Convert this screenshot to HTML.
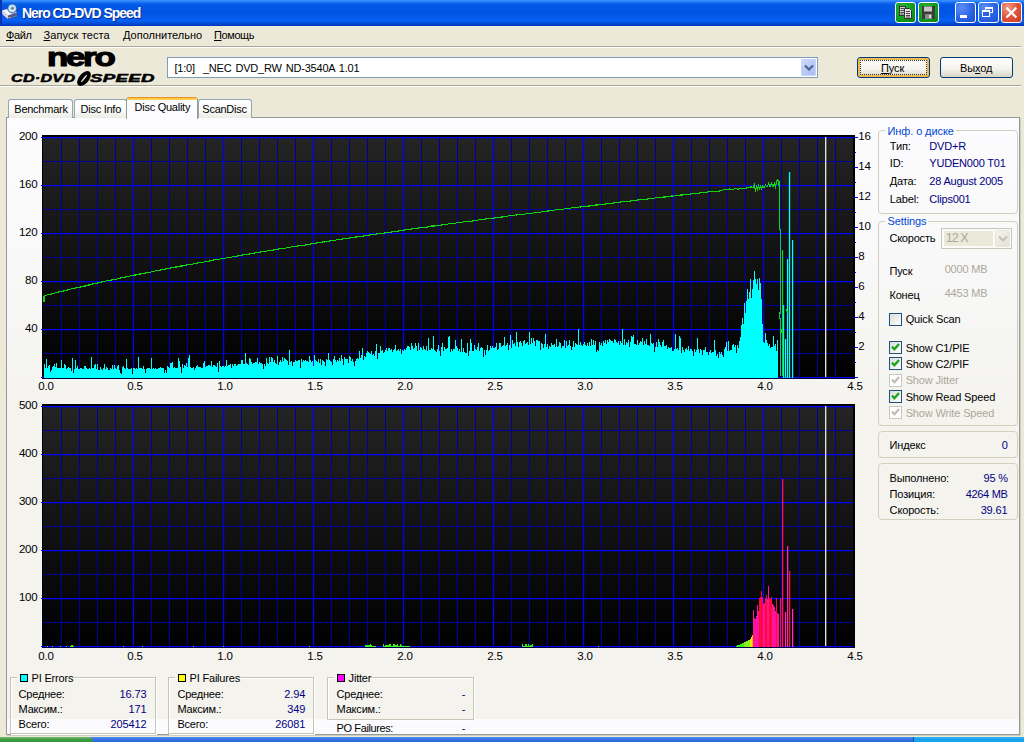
<!DOCTYPE html>
<html><head><meta charset="utf-8"><title>Nero CD-DVD Speed</title>
<style>
html,body{margin:0;padding:0}
body{width:1024px;height:742px;overflow:hidden;background:#ece9d8;position:relative;
 font-family:"Liberation Sans",sans-serif;font-size:11px}
.t{position:absolute;white-space:pre;line-height:14px;height:14px}
.a{position:absolute}
u{text-decoration:underline;text-underline-offset:1px}
.gb{position:absolute;border:1px solid #d0d0bf;border-radius:4px;box-sizing:border-box}
.cg{position:absolute;border:1px solid #c8c5b2;box-sizing:border-box;box-shadow:1px 1px 0 #fff, inset 1px 1px 0 #fff}
.cb{position:absolute;width:13px;height:13px;box-sizing:border-box;border:1px solid #1c5180;
 background:linear-gradient(135deg,#dcdcd7,#fff)}
.cb.d{border-color:#cac8bb;background:#fff}
.tb{position:absolute;top:2px;width:21px;height:21px;box-sizing:border-box;border:1px solid #fff;border-radius:3px}
.btn{position:absolute;box-sizing:border-box;border:1px solid #003c74;border-radius:3px;
 background:linear-gradient(#fff,#f3f2ea 60%,#d9d5c6);text-align:center}
</style></head><body>

<div class="a" style="left:0;top:0;width:1024px;height:26px;background:linear-gradient(#3d93ff 0,#2b80f8 1.5px,#0c66ee 3px,#0259e6 5px,#0054e2 12px,#0359ea 17px,#0661f4 20px,#0558e6 22px,#0347d0 24px,#0238b8 26px)"></div>
<div class="a" style="left:0;top:0;width:2px;height:26px;background:#0a34b4"></div>
<svg class="a" style="left:0;top:0" width="20" height="22" viewBox="0 0 20 22">
<path d="M2 10.4 L7.5 8.9 L17 12.2 L17 16.3 L7.8 18.9 L2.4 14.2Z" fill="#6a6ea8"/>
<path d="M2 10.4 L7.5 8.9 L17 12.2 L8 15.4Z" fill="#f6f6fb"/>
<path d="M2 10.4 L8 15.4 L7.8 18.9 L2.4 14.2Z" fill="#d4d5e6"/>
<path d="M8.4 16.2 L16.8 13.3 M8.4 17.2 L16.8 14.5" stroke="#454a80" stroke-width="0.8"/>
<circle cx="12.2" cy="8.4" r="4.5" fill="#9fd3f7" stroke="#33518f" stroke-width="0.9"/>
<circle cx="12.2" cy="8.4" r="3.1" fill="#e4f3fd"/>
<circle cx="12.4" cy="8.2" r="1.9" fill="#58b4f0"/>
<path d="M10.9 8.9 L14.8 6.9 L12.4 9.6Z" fill="#f0340e"/>
<rect x="8.8" y="17" width="1.4" height="1" fill="#f2d21c"/>
<rect x="14" y="15.9" width="1.1" height="0.9" fill="#2fa445"/>
</svg>
<div class="t" style="left:22.00px;top:6.15px;color:#fff;font-size:14px;letter-spacing:-1.05px;font-weight:bold;text-shadow:1px 1px 0 #0a2a8a;">Nero CD-DVD Speed</div>
<div class="tb" style="left:895px;background:radial-gradient(circle at 40% 35%,#2fbf3a,#0e9a1c 60%,#087a14)"></div>
<div class="tb" style="left:918px;background:radial-gradient(circle at 40% 35%,#2fbf3a,#0e9a1c 60%,#087a14)"></div>
<svg class="a" style="left:899px;top:5px" width="14" height="15" viewBox="0 0 14 15">
<rect x="0.5" y="1.5" width="6" height="9" fill="#d8d8d8" stroke="#333"/>
<path d="M5.5 3.5 h5 l2 2 v8 h-7z" fill="#e4e4e4" stroke="#333"/>
<path d="M1.5 3.5h3.5M1.5 5.5h3.5M1.5 7.5h3.5M1.5 9h3M7 6.5h4M7 8.5h4M7 10.5h4M7 12h4" stroke="#444" stroke-width="1"/>
</svg>
<svg class="a" style="left:921px;top:5px" width="15" height="15" viewBox="0 0 15 15">
<rect x="1" y="1" width="13" height="13" fill="#3c3c3c"/>
<rect x="3" y="1.5" width="8" height="5" fill="#c8c8c8"/>
<rect x="4" y="9" width="7" height="5" fill="#888"/>
<rect x="8" y="10" width="2" height="3" fill="#ddd"/>
</svg>
<div class="tb" style="left:955px;background:radial-gradient(circle at 30% 25%,#5b8ff5,#2a63e4 55%,#1b4fd0)"></div>
<div class="tb" style="left:978px;background:radial-gradient(circle at 30% 25%,#5b8ff5,#2a63e4 55%,#1b4fd0)"></div>
<div class="a" style="left:960px;top:15px;width:7px;height:3px;background:#fff"></div>
<div class="a" style="left:985px;top:7px;width:8px;height:6px;box-sizing:border-box;border:1px solid #fff;border-top-width:2px"></div>
<div class="a" style="left:982px;top:10px;width:8px;height:7px;box-sizing:border-box;border:1px solid #fff;border-top-width:2px;background:#2a63e4"></div>
<div class="tb" style="left:1001px;background:radial-gradient(circle at 30% 25%,#f0a088,#e0533a 50%,#c83a20)"></div>
<svg class="a" style="left:1005px;top:6px" width="13" height="13" viewBox="0 0 13 13">
<path d="M2.2 2.4 L10.6 10.8 M10.6 2.4 L2.2 10.8" stroke="#fff" stroke-width="2.1" stroke-linecap="square"/></svg>
<div class="t" style="left:6.00px;top:28.19px;color:#000;font-size:11px;letter-spacing:-0.35px;font-weight:normal;"><u>Ф</u>айл</div>
<div class="t" style="left:43.50px;top:28.19px;color:#000;font-size:11px;letter-spacing:0.1px;font-weight:normal;"><u>З</u>апуск теста</div>
<div class="t" style="left:123.00px;top:28.19px;color:#000;font-size:11px;letter-spacing:0px;font-weight:normal;"><u>Д</u>ополнительно</div>
<div class="t" style="left:214.00px;top:28.19px;color:#000;font-size:11px;letter-spacing:-0.4px;font-weight:normal;"><u>П</u>омощь</div>
<div class="a" style="left:0;top:46px;width:1021px;height:1px;background:#aca899"></div>
<div class="a" style="left:0;top:47px;width:1021px;height:1px;background:#fff"></div>
<div class="a" style="left:0;top:85px;width:1021px;height:1px;background:#aca899"></div>
<div class="a" style="left:0;top:86px;width:1021px;height:1px;background:#fff"></div>
<div class="t" style="left:46.5px;top:42px;height:30px;line-height:30px;font-size:26px;font-weight:bold;letter-spacing:-1.7px;color:#000;-webkit-text-stroke:1.1px #000;transform-origin:0 0;transform:scaleX(1.34)">nero</div>
<div class="t" style="left:10.5px;top:72px;height:13px;line-height:13px;font-size:11.5px;font-weight:bold;font-style:italic;letter-spacing:0.2px;color:#000;-webkit-text-stroke:0.5px #000;transform-origin:0 0;transform:scaleX(1.40)">CD·DVD</div>
<div class="t" style="left:90px;top:72px;height:13px;line-height:13px;font-size:11.5px;font-weight:bold;font-style:italic;letter-spacing:0.2px;color:#000;-webkit-text-stroke:0.5px #000;transform-origin:0 0;transform:scaleX(1.62)">SPEED</div>
<svg class="a" style="left:75px;top:70px" width="18" height="17" viewBox="0 0 18 17">
<ellipse cx="9" cy="8.5" rx="8.8" ry="5" transform="rotate(-50 9 8.5)" fill="#000"/>
<ellipse cx="9" cy="8.5" rx="4.8" ry="0.75" transform="rotate(-50 9 8.5)" fill="#ece9d8"/>
</svg>
<div class="a" style="left:167px;top:57px;width:651px;height:21px;box-sizing:border-box;border:1px solid #7f9db9;background:#fff"></div>
<div class="t" style="left:174.50px;top:61.19px;color:#000;font-size:11px;letter-spacing:-0.21px;font-weight:normal;word-spacing:1.2px;">[1:0]  _NEC DVD_RW ND-3540A 1.01</div>
<div class="a" style="left:801px;top:59px;width:15px;height:17px;border-radius:2px;background:linear-gradient(135deg,#cfdcfd,#b4c8f6 60%,#a6bcf0);box-shadow:inset 0 0 0 1px #c6d4fb"></div>
<svg class="a" style="left:804px;top:64px" width="10" height="8" viewBox="0 0 10 8">
<path d="M1 1.5 L5 5.5 L9 1.5" fill="none" stroke="#4d6185" stroke-width="2"/></svg>
<div class="btn" style="left:857px;top:57px;width:73px;height:21px;box-shadow:inset 0 0 0 2px #f0b850"></div>
<div class="a" style="left:860px;top:60px;width:67px;height:15px;box-sizing:border-box;border:1px dotted #333"></div>
<div class="t" style="left:881.00px;top:61.19px;color:#000;font-size:11px;letter-spacing:-0.1px;font-weight:normal;"><u>П</u>уск</div>
<div class="btn" style="left:940px;top:57px;width:73px;height:21px"></div>
<div class="t" style="left:960.00px;top:61.19px;color:#000;font-size:11px;letter-spacing:-0.1px;font-weight:normal;">Вы<u>х</u>од</div>
<div class="a" style="left:6px;top:117px;width:1014px;height:618px;box-sizing:border-box;border:1px solid #919b9c;background:linear-gradient(#fcfcfe 0,#f9f9fa 20%,#f4f3ee 48%,#f4f3ee 100%)"></div>
<div class="a" style="left:7px;top:719px;width:1012px;height:15px;background:#fbfbfd"></div>
<div class="a" style="left:1020px;top:118px;width:1px;height:618px;background:#cfcdc0"></div>
<div class="a" style="left:8px;top:99px;width:65px;height:19px;box-sizing:border-box;border:1px solid #91a7b4;border-bottom:none;border-radius:3px 3px 0 0;background:linear-gradient(#fff,#fafaf7 60%,#ecebe5)"></div>
<div class="t" style="left:14.30px;top:102.19px;color:#000;font-size:11px;letter-spacing:-0.25px;font-weight:normal;">Benchmark</div>
<div class="a" style="left:74px;top:99px;width:53px;height:19px;box-sizing:border-box;border:1px solid #91a7b4;border-bottom:none;border-radius:3px 3px 0 0;background:linear-gradient(#fff,#fafaf7 60%,#ecebe5)"></div>
<div class="t" style="left:80.50px;top:102.19px;color:#000;font-size:11px;letter-spacing:-0.25px;font-weight:normal;">Disc Info</div>
<div class="a" style="left:198px;top:99px;width:54px;height:19px;box-sizing:border-box;border:1px solid #91a7b4;border-bottom:none;border-radius:3px 3px 0 0;background:linear-gradient(#fff,#fafaf7 60%,#ecebe5)"></div>
<div class="t" style="left:202.30px;top:102.19px;color:#000;font-size:11px;letter-spacing:-0.25px;font-weight:normal;">ScanDisc</div>
<div class="a" style="left:126px;top:97px;width:72px;height:22px;box-sizing:border-box;border:1px solid #919b9c;border-top:none;border-bottom:none;border-radius:3px 3px 0 0;background:#fcfcfe;overflow:hidden"><div style="height:3px;margin:0 -1px;background:linear-gradient(#e68b2c 0,#e89a2c 1px,#ffc73c 1px,#ffcf55 3px)"></div></div>
<div class="t" style="left:134.50px;top:100.19px;color:#000;font-size:11px;letter-spacing:-0.25px;font-weight:normal;">Disc Quality</div>
<svg class="a" style="left:40px;top:133px" width="822" height="250" viewBox="40 133 822 250"><defs><linearGradient id="g135" x1="0" y1="0" x2="0" y2="1"><stop offset="0" stop-color="#242424"/><stop offset="1" stop-color="#000"/></linearGradient></defs><rect x="42" y="135" width="813" height="244" fill="#000"/><rect x="43" y="137" width="810" height="241" fill="url(#g135)"/><g shape-rendering="crispEdges"><rect x="61" y="137" width="1" height="241" fill="#00009e"/><rect x="79" y="137" width="1" height="241" fill="#00009e"/><rect x="97" y="137" width="1" height="241" fill="#00009e"/><rect x="115" y="137" width="1" height="241" fill="#00009e"/><rect x="133" y="137" width="1" height="241" fill="#0000ff"/><rect x="134" y="137" width="1" height="241" fill="#0000ff" opacity="0.25"/><rect x="151" y="137" width="1" height="241" fill="#00009e"/><rect x="169" y="137" width="1" height="241" fill="#00009e"/><rect x="187" y="137" width="1" height="241" fill="#00009e"/><rect x="205" y="137" width="1" height="241" fill="#00009e"/><rect x="223" y="137" width="1" height="241" fill="#0000ff"/><rect x="224" y="137" width="1" height="241" fill="#0000ff" opacity="0.25"/><rect x="241" y="137" width="1" height="241" fill="#00009e"/><rect x="259" y="137" width="1" height="241" fill="#00009e"/><rect x="277" y="137" width="1" height="241" fill="#00009e"/><rect x="295" y="137" width="1" height="241" fill="#00009e"/><rect x="313" y="137" width="1" height="241" fill="#0000ff"/><rect x="314" y="137" width="1" height="241" fill="#0000ff" opacity="0.25"/><rect x="331" y="137" width="1" height="241" fill="#00009e"/><rect x="349" y="137" width="1" height="241" fill="#00009e"/><rect x="367" y="137" width="1" height="241" fill="#00009e"/><rect x="385" y="137" width="1" height="241" fill="#00009e"/><rect x="403" y="137" width="1" height="241" fill="#0000ff"/><rect x="404" y="137" width="1" height="241" fill="#0000ff" opacity="0.25"/><rect x="421" y="137" width="1" height="241" fill="#00009e"/><rect x="439" y="137" width="1" height="241" fill="#00009e"/><rect x="457" y="137" width="1" height="241" fill="#00009e"/><rect x="475" y="137" width="1" height="241" fill="#00009e"/><rect x="493" y="137" width="1" height="241" fill="#0000ff"/><rect x="494" y="137" width="1" height="241" fill="#0000ff" opacity="0.25"/><rect x="511" y="137" width="1" height="241" fill="#00009e"/><rect x="529" y="137" width="1" height="241" fill="#00009e"/><rect x="547" y="137" width="1" height="241" fill="#00009e"/><rect x="565" y="137" width="1" height="241" fill="#00009e"/><rect x="583" y="137" width="1" height="241" fill="#0000ff"/><rect x="584" y="137" width="1" height="241" fill="#0000ff" opacity="0.25"/><rect x="601" y="137" width="1" height="241" fill="#00009e"/><rect x="619" y="137" width="1" height="241" fill="#00009e"/><rect x="637" y="137" width="1" height="241" fill="#00009e"/><rect x="655" y="137" width="1" height="241" fill="#00009e"/><rect x="673" y="137" width="1" height="241" fill="#0000ff"/><rect x="674" y="137" width="1" height="241" fill="#0000ff" opacity="0.25"/><rect x="691" y="137" width="1" height="241" fill="#00009e"/><rect x="709" y="137" width="1" height="241" fill="#00009e"/><rect x="727" y="137" width="1" height="241" fill="#00009e"/><rect x="745" y="137" width="1" height="241" fill="#00009e"/><rect x="763" y="137" width="1" height="241" fill="#0000ff"/><rect x="764" y="137" width="1" height="241" fill="#0000ff" opacity="0.25"/><rect x="781" y="137" width="1" height="241" fill="#00009e"/><rect x="799" y="137" width="1" height="241" fill="#00009e"/><rect x="817" y="137" width="1" height="241" fill="#00009e"/><rect x="835" y="137" width="1" height="241" fill="#00009e"/><rect x="43" y="137" width="810" height="1" fill="#0000ff"/><rect x="43" y="138" width="810" height="1" fill="#0000ff" opacity="0.25"/><rect x="41" y="137" width="2" height="1" fill="#0000ff"/><rect x="43" y="161" width="810" height="1" fill="#00009e"/><rect x="43" y="185" width="810" height="1" fill="#0000ff"/><rect x="43" y="186" width="810" height="1" fill="#0000ff" opacity="0.25"/><rect x="41" y="185" width="2" height="1" fill="#0000ff"/><rect x="43" y="209" width="810" height="1" fill="#00009e"/><rect x="43" y="233" width="810" height="1" fill="#0000ff"/><rect x="43" y="234" width="810" height="1" fill="#0000ff" opacity="0.25"/><rect x="41" y="233" width="2" height="1" fill="#0000ff"/><rect x="43" y="257" width="810" height="1" fill="#00009e"/><rect x="43" y="281" width="810" height="1" fill="#0000ff"/><rect x="43" y="282" width="810" height="1" fill="#0000ff" opacity="0.25"/><rect x="41" y="281" width="2" height="1" fill="#0000ff"/><rect x="43" y="305" width="810" height="1" fill="#00009e"/><rect x="43" y="329" width="810" height="1" fill="#0000ff"/><rect x="43" y="330" width="810" height="1" fill="#0000ff" opacity="0.25"/><rect x="41" y="329" width="2" height="1" fill="#0000ff"/><rect x="43" y="353" width="810" height="1" fill="#00009e"/><rect x="43" y="377" width="810" height="1" fill="#0000ff"/><rect x="43" y="378" width="810" height="1" fill="#0000ff" opacity="0.25"/><rect x="41" y="377" width="2" height="1" fill="#0000ff"/></g><path d="M44 378 L44 364.2 L45 364.2 L45 368.3 L46 368.3 L46 359.3 L47 359.3 L47 368.4 L48 368.4 L48 365.7 L49 365.7 L49 365.0 L50 365.0 L50 371.5 L51 371.5 L51 370.2 L52 370.2 L52 366.9 L53 366.9 L53 366.1 L54 366.1 L54 363.7 L55 363.7 L55 367.4 L56 367.4 L56 362.9 L57 362.9 L57 368.3 L58 368.3 L58 367.9 L59 367.9 L59 367.6 L60 367.6 L60 368.2 L61 368.2 L61 364.2 L62 364.2 L62 367.8 L63 367.8 L63 367.5 L64 367.5 L64 364.3 L65 364.3 L65 364.5 L66 364.5 L66 368.8 L67 368.8 L67 367.5 L68 367.5 L68 367.3 L69 367.3 L69 367.7 L70 367.7 L70 367.9 L71 367.9 L71 371.3 L72 371.3 L72 357.7 L73 357.7 L73 372.9 L74 372.9 L74 368.6 L75 368.6 L75 359.8 L76 359.8 L76 367.6 L77 367.6 L77 365.8 L78 365.8 L78 368.5 L79 368.5 L79 369.1 L80 369.1 L80 368.2 L81 368.2 L81 367.8 L82 367.8 L82 368.8 L83 368.8 L83 368.7 L84 368.7 L84 365.9 L85 365.9 L85 366.0 L86 366.0 L86 368.3 L87 368.3 L87 369.4 L88 369.4 L88 368.8 L89 368.8 L89 367.8 L90 367.8 L90 368.6 L91 368.6 L91 356.6 L92 356.6 L92 368.2 L93 368.2 L93 368.1 L94 368.1 L94 365.3 L95 365.3 L95 363.5 L96 363.5 L96 369.3 L97 369.3 L97 364.1 L98 364.1 L98 369.5 L99 369.5 L99 369.6 L100 369.6 L100 366.6 L101 366.6 L101 369.1 L102 369.1 L102 369.5 L103 369.5 L103 368.1 L104 368.1 L104 363.9 L105 363.9 L105 369.2 L106 369.2 L106 367.4 L107 367.4 L107 368.3 L108 368.3 L108 369.6 L109 369.6 L109 369.8 L110 369.8 L110 368.3 L111 368.3 L111 368.8 L112 368.8 L112 365.3 L113 365.3 L113 369.1 L114 369.1 L114 365.2 L115 365.2 L115 368.4 L116 368.4 L116 368.7 L117 368.7 L117 365.7 L118 365.7 L118 365.0 L119 365.0 L119 369.5 L120 369.5 L120 372.5 L121 372.5 L121 373.7 L122 373.7 L122 367.4 L123 367.4 L123 366.0 L124 366.0 L124 368.3 L125 368.3 L125 369.0 L126 369.0 L126 358.7 L127 358.7 L127 368.2 L128 368.2 L128 368.5 L129 368.5 L129 369.4 L130 369.4 L130 369.1 L131 369.1 L131 368.0 L132 368.0 L132 373.6 L133 373.6 L133 367.7 L134 367.7 L134 368.0 L135 368.0 L135 369.3 L136 369.3 L136 367.9 L137 367.9 L137 368.9 L138 368.9 L138 357.0 L139 357.0 L139 368.4 L140 368.4 L140 367.8 L141 367.8 L141 367.9 L142 367.9 L142 369.0 L143 369.0 L143 365.5 L144 365.5 L144 368.9 L145 368.9 L145 372.5 L146 372.5 L146 368.5 L147 368.5 L147 367.7 L148 367.7 L148 367.6 L149 367.6 L149 368.3 L150 368.3 L150 369.2 L151 369.2 L151 358.0 L152 358.0 L152 368.9 L153 368.9 L153 367.8 L154 367.8 L154 368.5 L155 368.5 L155 368.1 L156 368.1 L156 368.9 L157 368.9 L157 368.6 L158 368.6 L158 367.6 L159 367.6 L159 368.0 L160 368.0 L160 367.3 L161 367.3 L161 367.8 L162 367.8 L162 368.0 L163 368.0 L163 368.1 L164 368.1 L164 372.6 L165 372.6 L165 370.4 L166 370.4 L166 372.9 L167 372.9 L167 365.8 L168 365.8 L168 367.4 L169 367.4 L169 367.5 L170 367.5 L170 363.2 L171 363.2 L171 362.9 L172 362.9 L172 362.0 L173 362.0 L173 367.9 L174 367.9 L174 366.7 L175 366.7 L175 368.3 L176 368.3 L176 367.5 L177 367.5 L177 368.1 L178 368.1 L178 358.2 L179 358.2 L179 360.5 L180 360.5 L180 367.1 L181 367.1 L181 373.2 L182 373.2 L182 364.3 L183 364.3 L183 368.2 L184 368.2 L184 365.0 L185 365.0 L185 366.3 L186 366.3 L186 362.9 L187 362.9 L187 366.9 L188 366.9 L188 357.9 L189 357.9 L189 355.0 L190 355.0 L190 366.7 L191 366.7 L191 367.8 L192 367.8 L192 367.8 L193 367.8 L193 366.9 L194 366.9 L194 369.9 L195 369.9 L195 367.5 L196 367.5 L196 365.6 L197 365.6 L197 365.4 L198 365.4 L198 367.0 L199 367.0 L199 367.0 L200 367.0 L200 367.2 L201 367.2 L201 367.5 L202 367.5 L202 367.5 L203 367.5 L203 363.4 L204 363.4 L204 361.1 L205 361.1 L205 366.5 L206 366.5 L206 365.5 L207 365.5 L207 366.2 L208 366.2 L208 365.1 L209 365.1 L209 365.4 L210 365.4 L210 365.8 L211 365.8 L211 361.1 L212 361.1 L212 367.0 L213 367.0 L213 365.2 L214 365.2 L214 365.2 L215 365.2 L215 365.5 L216 365.5 L216 366.5 L217 366.5 L217 363.1 L218 363.1 L218 372.0 L219 372.0 L219 360.8 L220 360.8 L220 366.1 L221 366.1 L221 366.8 L222 366.8 L222 365.7 L223 365.7 L223 366.3 L224 366.3 L224 366.7 L225 366.7 L225 366.4 L226 366.4 L226 359.6 L227 359.6 L227 365.9 L228 365.9 L228 365.1 L229 365.1 L229 364.7 L230 364.7 L230 364.1 L231 364.1 L231 368.2 L232 368.2 L232 364.3 L233 364.3 L233 366.0 L234 366.0 L234 363.7 L235 363.7 L235 364.0 L236 364.0 L236 365.5 L237 365.5 L237 364.5 L238 364.5 L238 363.6 L239 363.6 L239 364.1 L240 364.1 L240 363.8 L241 363.8 L241 359.5 L242 359.5 L242 360.1 L243 360.1 L243 363.9 L244 363.9 L244 363.6 L245 363.6 L245 352.8 L246 352.8 L246 363.1 L247 363.1 L247 363.6 L248 363.6 L248 364.9 L249 364.9 L249 357.7 L250 357.7 L250 358.9 L251 358.9 L251 362.1 L252 362.1 L252 363.7 L253 363.7 L253 362.8 L254 362.8 L254 362.9 L255 362.9 L255 362.3 L256 362.3 L256 362.3 L257 362.3 L257 357.9 L258 357.9 L258 363.6 L259 363.6 L259 362.3 L260 362.3 L260 363.4 L261 363.4 L261 362.8 L262 362.8 L262 363.8 L263 363.8 L263 369.3 L264 369.3 L264 364.0 L265 364.0 L265 365.6 L266 365.6 L266 358.4 L267 358.4 L267 363.4 L268 363.4 L268 363.5 L269 363.5 L269 356.7 L270 356.7 L270 362.3 L271 362.3 L271 357.1 L272 357.1 L272 358.0 L273 358.0 L273 362.2 L274 362.2 L274 360.4 L275 360.4 L275 362.7 L276 362.7 L276 363.6 L277 363.6 L277 356.3 L278 356.3 L278 364.8 L279 364.8 L279 362.4 L280 362.4 L280 360.4 L281 360.4 L281 362.3 L282 362.3 L282 357.3 L283 357.3 L283 360.7 L284 360.7 L284 358.3 L285 358.3 L285 359.2 L286 359.2 L286 360.2 L287 360.2 L287 360.6 L288 360.6 L288 364.7 L289 364.7 L289 350.2 L290 350.2 L290 361.7 L291 361.7 L291 361.0 L292 361.0 L292 365.8 L293 365.8 L293 361.5 L294 361.5 L294 362.0 L295 362.0 L295 359.7 L296 359.7 L296 360.7 L297 360.7 L297 361.0 L298 361.0 L298 360.4 L299 360.4 L299 359.8 L300 359.8 L300 368.1 L301 368.1 L301 359.4 L302 359.4 L302 362.4 L303 362.4 L303 360.3 L304 360.3 L304 360.7 L305 360.7 L305 360.0 L306 360.0 L306 361.1 L307 361.1 L307 361.2 L308 361.2 L308 362.2 L309 362.2 L309 356.1 L310 356.1 L310 360.2 L311 360.2 L311 361.6 L312 361.6 L312 361.4 L313 361.4 L313 366.3 L314 366.3 L314 354.6 L315 354.6 L315 359.8 L316 359.8 L316 360.6 L317 360.6 L317 362.2 L318 362.2 L318 359.0 L319 359.0 L319 362.6 L320 362.6 L320 358.7 L321 358.7 L321 364.9 L322 364.9 L322 359.9 L323 359.9 L323 360.6 L324 360.6 L324 362.0 L325 362.0 L325 366.1 L326 366.1 L326 359.0 L327 359.0 L327 359.9 L328 359.9 L328 352.8 L329 352.8 L329 360.1 L330 360.1 L330 361.3 L331 361.3 L331 362.0 L332 362.0 L332 365.3 L333 365.3 L333 359.0 L334 359.0 L334 356.4 L335 356.4 L335 359.6 L336 359.6 L336 361.9 L337 361.9 L337 359.6 L338 359.6 L338 361.1 L339 361.1 L339 357.6 L340 357.6 L340 360.8 L341 360.8 L341 355.4 L342 355.4 L342 359.4 L343 359.4 L343 364.8 L344 364.8 L344 357.2 L345 357.2 L345 359.2 L346 359.2 L346 358.6 L347 358.6 L347 358.6 L348 358.6 L348 362.5 L349 362.5 L349 355.6 L350 355.6 L350 356.5 L351 356.5 L351 360.5 L352 360.5 L352 358.7 L353 358.7 L353 361.8 L354 361.8 L354 365.9 L355 365.9 L355 360.8 L356 360.8 L356 359.1 L357 359.1 L357 357.9 L358 357.9 L358 358.7 L359 358.7 L359 350.7 L360 350.7 L360 358.2 L361 358.2 L361 355.2 L362 355.2 L362 347.8 L363 347.8 L363 359.7 L364 359.7 L364 356.0 L365 356.0 L365 357.1 L366 357.1 L366 353.1 L367 353.1 L367 351.2 L368 351.2 L368 352.0 L369 352.0 L369 352.6 L370 352.6 L370 354.4 L371 354.4 L371 351.3 L372 351.3 L372 354.5 L373 354.5 L373 354.1 L374 354.1 L374 355.5 L375 355.5 L375 350.8 L376 350.8 L376 343.9 L377 343.9 L377 359.2 L378 359.2 L378 353.0 L379 353.0 L379 352.7 L380 352.7 L380 345.7 L381 345.7 L381 350.8 L382 350.8 L382 350.4 L383 350.4 L383 352.6 L384 352.6 L384 352.3 L385 352.3 L385 349.6 L386 349.6 L386 347.7 L387 347.7 L387 350.8 L388 350.8 L388 348.3 L389 348.3 L389 348.1 L390 348.1 L390 349.9 L391 349.9 L391 349.3 L392 349.3 L392 351.8 L393 351.8 L393 349.5 L394 349.5 L394 348.6 L395 348.6 L395 344.6 L396 344.6 L396 350.9 L397 350.9 L397 350.3 L398 350.3 L398 349.1 L399 349.1 L399 351.2 L400 351.2 L400 348.6 L401 348.6 L401 354.4 L402 354.4 L402 350.4 L403 350.4 L403 350.9 L404 350.9 L404 348.8 L405 348.8 L405 349.6 L406 349.6 L406 348.1 L407 348.1 L407 345.9 L408 345.9 L408 346.2 L409 346.2 L409 346.6 L410 346.6 L410 350.2 L411 350.2 L411 342.8 L412 342.8 L412 345.6 L413 345.6 L413 348.9 L414 348.9 L414 348.2 L415 348.2 L415 342.9 L416 342.9 L416 345.6 L417 345.6 L417 350.6 L418 350.6 L418 343.1 L419 343.1 L419 349.5 L420 349.5 L420 346.5 L421 346.5 L421 347.8 L422 347.8 L422 350.2 L423 350.2 L423 346.3 L424 346.3 L424 348.6 L425 348.6 L425 349.5 L426 349.5 L426 346.1 L427 346.1 L427 350.8 L428 350.8 L428 337.9 L429 337.9 L429 349.5 L430 349.5 L430 349.6 L431 349.6 L431 348.3 L432 348.3 L432 348.8 L433 348.8 L433 336.4 L434 336.4 L434 349.9 L435 349.9 L435 351.2 L436 351.2 L436 352.3 L437 352.3 L437 349.3 L438 349.3 L438 345.0 L439 345.0 L439 351.4 L440 351.4 L440 356.2 L441 356.2 L441 347.0 L442 347.0 L442 343.3 L443 343.3 L443 350.9 L444 350.9 L444 347.3 L445 347.3 L445 348.6 L446 348.6 L446 349.3 L447 349.3 L447 347.6 L448 347.6 L448 337.3 L449 337.3 L449 335.6 L450 335.6 L450 351.6 L451 351.6 L451 349.2 L452 349.2 L452 350.6 L453 350.6 L453 349.0 L454 349.0 L454 348.6 L455 348.6 L455 339.6 L456 339.6 L456 345.5 L457 345.5 L457 348.0 L458 348.0 L458 351.4 L459 351.4 L459 349.0 L460 349.0 L460 351.8 L461 351.8 L461 338.9 L462 338.9 L462 351.8 L463 351.8 L463 347.8 L464 347.8 L464 351.9 L465 351.9 L465 353.4 L466 353.4 L466 353.1 L467 353.1 L467 342.6 L468 342.6 L468 355.9 L469 355.9 L469 351.2 L470 351.2 L470 338.9 L471 338.9 L471 343.1 L472 343.1 L472 350.5 L473 350.5 L473 351.2 L474 351.2 L474 344.6 L475 344.6 L475 349.1 L476 349.1 L476 350.1 L477 350.1 L477 346.5 L478 346.5 L478 342.6 L479 342.6 L479 351.2 L480 351.2 L480 348.2 L481 348.2 L481 346.8 L482 346.8 L482 348.4 L483 348.4 L483 356.6 L484 356.6 L484 349.5 L485 349.5 L485 355.4 L486 355.4 L486 349.6 L487 349.6 L487 345.2 L488 345.2 L488 351.4 L489 351.4 L489 350.2 L490 350.2 L490 345.9 L491 345.9 L491 347.7 L492 347.7 L492 345.6 L493 345.6 L493 348.0 L494 348.0 L494 348.4 L495 348.4 L495 346.8 L496 346.8 L496 343.0 L497 343.0 L497 350.2 L498 350.2 L498 349.3 L499 349.3 L499 343.4 L500 343.4 L500 342.6 L501 342.6 L501 347.2 L502 347.2 L502 345.9 L503 345.9 L503 344.8 L504 344.8 L504 337.2 L505 337.2 L505 345.8 L506 345.8 L506 345.1 L507 345.1 L507 343.0 L508 343.0 L508 350.3 L509 350.3 L509 345.2 L510 345.2 L510 334.9 L511 334.9 L511 348.2 L512 348.2 L512 340.0 L513 340.0 L513 343.8 L514 343.8 L514 343.4 L515 343.4 L515 346.4 L516 346.4 L516 332.2 L517 332.2 L517 341.8 L518 341.8 L518 347.0 L519 347.0 L519 341.6 L520 341.6 L520 341.4 L521 341.4 L521 343.0 L522 343.0 L522 346.1 L523 346.1 L523 340.9 L524 340.9 L524 340.1 L525 340.1 L525 344.1 L526 344.1 L526 342.7 L527 342.7 L527 342.0 L528 342.0 L528 344.9 L529 344.9 L529 331.8 L530 331.8 L530 343.6 L531 343.6 L531 338.3 L532 338.3 L532 342.7 L533 342.7 L533 338.1 L534 338.1 L534 340.8 L535 340.8 L535 345.9 L536 345.9 L536 340.0 L537 340.0 L537 340.2 L538 340.2 L538 341.4 L539 341.4 L539 341.2 L540 341.2 L540 350.1 L541 350.1 L541 342.5 L542 342.5 L542 344.2 L543 344.2 L543 347.7 L544 347.7 L544 344.0 L545 344.0 L545 333.5 L546 333.5 L546 346.5 L547 346.5 L547 343.8 L548 343.8 L548 348.6 L549 348.6 L549 346.4 L550 346.4 L550 346.5 L551 346.5 L551 343.4 L552 343.4 L552 344.8 L553 344.8 L553 344.7 L554 344.7 L554 344.1 L555 344.1 L555 347.4 L556 347.4 L556 338.8 L557 338.8 L557 346.8 L558 346.8 L558 346.2 L559 346.2 L559 342.2 L560 342.2 L560 342.9 L561 342.9 L561 348.3 L562 348.3 L562 345.5 L563 345.5 L563 346.1 L564 346.1 L564 340.3 L565 340.3 L565 347.7 L566 347.7 L566 340.5 L567 340.5 L567 346.0 L568 346.0 L568 344.9 L569 344.9 L569 339.8 L570 339.8 L570 345.7 L571 345.7 L571 350.4 L572 350.4 L572 346.5 L573 346.5 L573 341.0 L574 341.0 L574 347.3 L575 347.3 L575 343.1 L576 343.1 L576 343.6 L577 343.6 L577 345.0 L578 345.0 L578 328.6 L579 328.6 L579 345.4 L580 345.4 L580 341.5 L581 341.5 L581 345.0 L582 345.0 L582 345.9 L583 345.9 L583 343.8 L584 343.8 L584 342.3 L585 342.3 L585 345.0 L586 345.0 L586 346.3 L587 346.3 L587 342.7 L588 342.7 L588 346.1 L589 346.1 L589 341.9 L590 341.9 L590 346.3 L591 346.3 L591 339.2 L592 339.2 L592 345.0 L593 345.0 L593 339.5 L594 339.5 L594 345.3 L595 345.3 L595 341.0 L596 341.0 L596 351.7 L597 351.7 L597 349.5 L598 349.5 L598 350.5 L599 350.5 L599 341.6 L600 341.6 L600 345.3 L601 345.3 L601 343.4 L602 343.4 L602 346.4 L603 346.4 L603 341.0 L604 341.0 L604 343.0 L605 343.0 L605 339.8 L606 339.8 L606 343.6 L607 343.6 L607 339.9 L608 339.9 L608 342.3 L609 342.3 L609 339.4 L610 339.4 L610 340.0 L611 340.0 L611 341.2 L612 341.2 L612 341.3 L613 341.3 L613 342.9 L614 342.9 L614 338.9 L615 338.9 L615 340.4 L616 340.4 L616 341.5 L617 341.5 L617 342.9 L618 342.9 L618 341.4 L619 341.4 L619 344.7 L620 344.7 L620 341.2 L621 341.2 L621 343.1 L622 343.1 L622 329.0 L623 329.0 L623 344.9 L624 344.9 L624 339.3 L625 339.3 L625 345.4 L626 345.4 L626 342.3 L627 342.3 L627 342.5 L628 342.5 L628 340.3 L629 340.3 L629 347.2 L630 347.2 L630 341.5 L631 341.5 L631 336.0 L632 336.0 L632 336.6 L633 336.6 L633 334.9 L634 334.9 L634 343.6 L635 343.6 L635 344.1 L636 344.1 L636 345.0 L637 345.0 L637 340.1 L638 340.1 L638 345.2 L639 345.2 L639 342.5 L640 342.5 L640 341.4 L641 341.4 L641 342.4 L642 342.4 L642 338.1 L643 338.1 L643 344.5 L644 344.5 L644 341.3 L645 341.3 L645 343.8 L646 343.8 L646 338.9 L647 338.9 L647 344.7 L648 344.7 L648 345.3 L649 345.3 L649 345.5 L650 345.5 L650 334.4 L651 334.4 L651 343.2 L652 343.2 L652 344.0 L653 344.0 L653 343.0 L654 343.0 L654 351.6 L655 351.6 L655 347.1 L656 347.1 L656 341.6 L657 341.6 L657 347.0 L658 347.0 L658 339.1 L659 339.1 L659 342.1 L660 342.1 L660 345.4 L661 345.4 L661 347.3 L662 347.3 L662 342.2 L663 342.2 L663 339.7 L664 339.7 L664 345.7 L665 345.7 L665 345.5 L666 345.5 L666 345.1 L667 345.1 L667 349.0 L668 349.0 L668 347.2 L669 347.2 L669 348.0 L670 348.0 L670 347.5 L671 347.5 L671 346.7 L672 346.7 L672 351.0 L673 351.0 L673 350.7 L674 350.7 L674 348.7 L675 348.7 L675 334.3 L676 334.3 L676 349.1 L677 349.1 L677 348.1 L678 348.1 L678 349.9 L679 349.9 L679 336.1 L680 336.1 L680 338.3 L681 338.3 L681 352.5 L682 352.5 L682 346.8 L683 346.8 L683 349.7 L684 349.7 L684 352.4 L685 352.4 L685 349.1 L686 349.1 L686 347.9 L687 347.9 L687 350.2 L688 350.2 L688 345.9 L689 345.9 L689 350.7 L690 350.7 L690 348.6 L691 348.6 L691 348.7 L692 348.7 L692 350.5 L693 350.5 L693 355.9 L694 355.9 L694 349.0 L695 349.0 L695 351.7 L696 351.7 L696 350.2 L697 350.2 L697 338.0 L698 338.0 L698 348.7 L699 348.7 L699 353.3 L700 353.3 L700 348.9 L701 348.9 L701 350.4 L702 350.4 L702 354.7 L703 354.7 L703 350.4 L704 350.4 L704 350.1 L705 350.1 L705 346.5 L706 346.5 L706 351.5 L707 351.5 L707 352.3 L708 352.3 L708 355.2 L709 355.2 L709 352.1 L710 352.1 L710 349.9 L711 349.9 L711 352.8 L712 352.8 L712 351.9 L713 351.9 L713 351.9 L714 351.9 L714 339.6 L715 339.6 L715 349.9 L716 349.9 L716 355.8 L717 355.8 L717 354.3 L718 354.3 L718 358.0 L719 358.0 L719 352.0 L720 352.0 L720 354.0 L721 354.0 L721 352.4 L722 352.4 L722 354.6 L723 354.6 L723 357.1 L724 357.1 L724 349.2 L725 349.2 L725 347.1 L726 347.1 L726 342.3 L727 342.3 L727 351.2 L728 351.2 L728 341.0 L729 341.0 L729 351.4 L730 351.4 L730 350.4 L731 350.4 L731 350.4 L732 350.4 L732 344.8 L733 344.8 L733 344.0 L734 344.0 L734 347.4 L735 347.4 L735 345.3 L736 345.3 L736 352.8 L737 352.8 L737 344.8 L738 344.8 L738 347.6 L739 347.6 L739 340.7 L740 340.7 L740 337.4 L741 337.4 L741 325.3 L742 325.3 L742 317.8 L743 317.8 L743 324.2 L744 324.2 L744 303.2 L745 303.2 L745 312.7 L746 312.7 L746 301.4 L747 301.4 L747 301.5 L748 301.5 L748 299.0 L749 299.0 L749 291.8 L750 291.8 L750 284.7 L751 284.7 L751 298.0 L752 298.0 L752 289.0 L753 289.0 L753 280.4 L754 280.4 L754 293.8 L755 293.8 L755 279.0 L756 279.0 L756 284.1 L757 284.1 L757 279.4 L758 279.4 L758 289.9 L759 289.9 L759 294.9 L760 294.9 L760 283.0 L761 283.0 L761 299.3 L762 299.3 L762 323.7 L763 323.7 L763 341.8 L764 341.8 L764 342.9 L765 342.9 L765 333.2 L766 333.2 L766 340.3 L767 340.3 L767 343.1 L768 343.1 L768 345.7 L769 345.7 L769 343.8 L770 343.8 L770 348.4 L771 348.4 L771 347.4 L772 347.4 L772 347.4 L773 347.4 L773 335.9 L774 335.9 L774 345.8 L775 345.8 L775 344.4 L776 344.4 L776 351.2 L777 351.2 L777 340.2 L778 340.2 L778 378Z" fill="#00ffff" shape-rendering="crispEdges"/><rect x="754" y="271" width="1" height="106" fill="#0ff" shape-rendering="crispEdges"/><rect x="750" y="279" width="1" height="98" fill="#0ff" shape-rendering="crispEdges"/><rect x="759" y="278" width="1" height="99" fill="#0ff" shape-rendering="crispEdges"/><rect x="757" y="280" width="1" height="97" fill="#0ff" shape-rendering="crispEdges"/><rect x="747" y="289" width="1" height="88" fill="#0ff" shape-rendering="crispEdges"/><rect x="61" y="360" width="1" height="17" fill="#0ff"/><rect x="782.9" y="305" width="1.3" height="73" fill="#00ffff"/><rect x="784.9" y="339" width="1.3" height="39" fill="#00ffff"/><rect x="786.9" y="259" width="1.3" height="119" fill="#00ffff"/><rect x="788.9" y="172" width="1.3" height="206" fill="#00ffff"/><rect x="791.9" y="240" width="1.3" height="138" fill="#00ffff"/><path d="M44 302 L44 296 L45 295.7 L46 295.2 L47 295.0 L48 294.6 L49 294.6 L50 294.2 L51 294.2 L52 293.9 L53 293.6 L54 293.5 L55 292.9 L56 292.5 L57 292.3 L58 292.1 L59 291.8 L60 291.5 L61 291.5 L62 291.4 L63 291.0 L64 291.0 L65 290.7 L66 290.1 L67 290.1 L68 289.8 L69 289.4 L70 289.6 L71 289.0 L72 288.9 L73 288.7 L74 288.6 L75 288.3 L76 287.9 L77 287.7 L78 287.3 L79 287.5 L80 287.3 L81 286.6 L82 286.3 L83 286.2 L84 286.0 L85 286.1 L86 285.8 L87 285.6 L88 285.0 L89 285.1 L90 284.8 L91 284.6 L92 284.5 L93 283.8 L94 283.7 L95 283.7 L96 283.6 L97 283.3 L98 282.8 L99 282.8 L100 282.6 L101 282.1 L102 282.0 L103 281.7 L104 281.4 L105 281.4 L106 281.0 L107 280.8 L108 280.6 L109 280.6 L110 280.1 L111 280.2 L112 279.7 L113 279.5 L114 279.7 L115 279.1 L116 279.3 L117 279.0 L118 278.8 L119 278.2 L120 278.2 L121 277.8 L122 278.0 L123 277.7 L124 277.4 L125 277.1 L126 276.9 L127 276.9 L128 276.5 L129 276.4 L130 275.9 L131 275.8 L132 275.5 L133 275.6 L134 275.3 L135 274.9 L136 275.1 L137 274.6 L138 274.4 L139 274.1 L140 274.0 L141 274.0 L142 273.6 L143 273.3 L144 273.3 L145 273.0 L146 273.1 L147 272.5 L148 272.7 L149 272.1 L150 272.3 L151 272.0 L152 271.5 L153 271.5 L154 271.2 L155 271.0 L156 270.7 L157 270.6 L158 270.8 L159 270.6 L160 270.3 L161 269.7 L162 269.6 L163 269.7 L164 269.1 L165 269.3 L166 268.9 L167 269.0 L168 268.3 L169 268.5 L170 268.1 L171 267.8 L172 267.6 L173 267.8 L174 267.4 L175 267.1 L176 267.0 L177 267.1 L178 266.5 L179 266.5 L180 266.1 L181 265.9 L182 266.1 L183 265.8 L184 265.4 L185 265.2 L186 265.0 L187 265.0 L188 264.8 L189 264.5 L190 264.3 L191 264.3 L192 264.2 L193 264.0 L194 263.7 L195 263.4 L196 263.1 L197 263.3 L198 262.9 L199 262.9 L200 262.4 L201 262.6 L202 262.2 L203 262.2 L204 262.1 L205 261.7 L206 261.3 L207 261.5 L208 261.1 L209 261.2 L210 260.7 L211 260.5 L212 260.6 L213 260.2 L214 259.9 L215 259.8 L216 259.8 L217 259.3 L218 259.4 L219 259.2 L220 259.0 L221 258.7 L222 258.8 L223 258.7 L224 258.5 L225 258.1 L226 258.1 L227 257.7 L228 257.8 L229 257.2 L230 257.5 L231 257.3 L232 256.9 L233 256.8 L234 256.6 L235 256.4 L236 256.0 L237 256.3 L238 255.8 L239 255.6 L240 255.4 L241 255.3 L242 255.4 L243 254.8 L244 254.7 L245 254.8 L246 254.4 L247 254.1 L248 254.2 L249 254.1 L250 253.9 L251 253.8 L252 253.3 L253 253.5 L254 253.3 L255 252.8 L256 252.7 L257 252.7 L258 252.5 L259 252.2 L260 252.0 L261 252.0 L262 251.7 L263 251.7 L264 251.7 L265 251.2 L266 251.2 L267 251.1 L268 250.7 L269 250.9 L270 250.7 L271 250.3 L272 250.2 L273 250.2 L274 249.9 L275 249.7 L276 249.8 L277 249.5 L278 249.1 L279 248.9 L280 248.8 L281 248.7 L282 248.8 L283 248.6 L284 248.5 L285 248.2 L286 248.1 L287 247.5 L288 247.6 L289 247.7 L290 247.5 L291 247.0 L292 246.9 L293 246.9 L294 246.6 L295 246.5 L296 246.1 L297 246.1 L298 246.0 L299 245.6 L300 245.5 L301 245.8 L302 245.5 L303 245.4 L304 245.1 L305 245.1 L306 244.9 L307 244.8 L308 244.2 L309 244.3 L310 244.0 L311 244.0 L312 243.7 L313 243.7 L314 243.7 L315 243.4 L316 243.1 L317 243.0 L318 242.8 L319 242.9 L320 242.5 L321 242.3 L322 242.3 L323 241.9 L324 242.0 L325 242.0 L326 241.6 L327 241.4 L328 241.3 L329 241.2 L330 240.8 L331 240.7 L332 240.5 L333 240.5 L334 240.4 L335 240.2 L336 240.0 L337 239.8 L338 239.8 L339 239.8 L340 239.6 L341 239.4 L342 239.3 L343 238.9 L344 239.0 L345 238.7 L346 238.6 L347 238.5 L348 238.3 L349 238.1 L350 237.9 L351 237.7 L352 237.7 L353 237.5 L354 237.4 L355 237.0 L356 237.0 L357 237.1 L358 236.7 L359 236.7 L360 236.5 L361 236.3 L362 236.5 L363 236.0 L364 236.1 L365 235.6 L366 235.4 L367 235.7 L368 235.3 L369 235.0 L370 235.0 L371 234.9 L372 234.9 L373 234.4 L374 234.3 L375 234.5 L376 234.3 L377 233.8 L378 233.8 L379 233.7 L380 233.7 L381 233.5 L382 233.5 L383 233.3 L384 233.0 L385 233.0 L386 232.8 L387 232.7 L388 232.4 L389 232.4 L390 232.2 L391 232.2 L392 231.7 L393 231.9 L394 231.3 L395 231.6 L396 231.3 L397 231.1 L398 231.2 L399 230.9 L400 230.7 L401 230.7 L402 230.6 L403 230.3 L404 230.1 L405 230.0 L406 229.8 L407 229.8 L408 229.5 L409 229.4 L410 229.3 L411 229.1 L412 228.9 L413 229.0 L414 228.9 L415 228.6 L416 228.4 L417 228.2 L418 228.1 L419 227.9 L420 227.9 L421 227.8 L422 227.4 L423 227.7 L424 227.3 L425 227.4 L426 227.2 L427 227.2 L428 226.6 L429 226.6 L430 226.7 L431 226.1 L432 226.0 L433 226.1 L434 226.0 L435 226.0 L436 225.8 L437 225.6 L438 225.7 L439 225.3 L440 225.1 L441 225.1 L442 224.8 L443 224.7 L444 224.6 L445 224.4 L446 224.5 L447 224.3 L448 224.1 L449 223.7 L450 223.7 L451 223.6 L452 223.5 L453 223.4 L454 223.4 L455 223.3 L456 223.0 L457 222.8 L458 222.8 L459 222.8 L460 222.3 L461 222.3 L462 222.3 L463 221.9 L464 221.8 L465 222.0 L466 221.8 L467 221.5 L468 221.2 L469 221.4 L470 221.2 L471 221.1 L472 221.1 L473 220.9 L474 220.5 L475 220.3 L476 220.2 L477 220.2 L478 220.0 L479 219.7 L480 219.6 L481 219.7 L482 219.5 L483 219.3 L484 219.5 L485 219.2 L486 218.7 L487 218.8 L488 218.9 L489 218.5 L490 218.5 L491 218.1 L492 218.1 L493 218.2 L494 218.0 L495 217.9 L496 217.5 L497 217.5 L498 217.4 L499 217.2 L500 217.2 L501 217.0 L502 217.1 L503 216.8 L504 216.6 L505 216.3 L506 216.2 L507 216.4 L508 215.9 L509 215.8 L510 215.7 L511 215.7 L512 215.7 L513 215.5 L514 215.5 L515 215.0 L516 214.8 L517 215.1 L518 214.7 L519 214.8 L520 214.5 L521 214.3 L522 214.2 L523 214.0 L524 214.3 L525 214.0 L526 213.7 L527 213.6 L528 213.5 L529 213.2 L530 213.5 L531 213.2 L532 213.3 L533 212.9 L534 212.8 L535 212.5 L536 212.3 L537 212.6 L538 212.5 L539 212.1 L540 212.2 L541 212.1 L542 211.7 L543 211.7 L544 211.7 L545 211.4 L546 211.5 L547 211.0 L548 211.0 L549 211.0 L550 210.6 L551 210.5 L552 210.7 L553 210.4 L554 210.4 L555 210.0 L556 209.9 L557 209.8 L558 209.6 L559 209.9 L560 209.4 L561 209.4 L562 209.1 L563 209.2 L564 209.0 L565 208.9 L566 208.6 L567 208.5 L568 208.7 L569 208.3 L570 208.2 L571 208.0 L572 207.9 L573 207.8 L574 207.6 L575 207.8 L576 207.5 L577 207.3 L578 207.4 L579 207.0 L580 206.9 L581 207.1 L582 206.6 L583 206.7 L584 206.7 L585 206.6 L586 206.2 L587 206.1 L588 206.2 L589 205.9 L590 206.1 L591 205.6 L592 205.8 L593 205.5 L594 205.2 L595 205.2 L596 204.9 L597 205.1 L598 204.8 L599 205.0 L600 204.7 L601 204.4 L602 204.3 L603 204.3 L604 204.0 L605 204.2 L606 203.7 L607 203.8 L608 203.7 L609 203.4 L610 203.6 L611 203.3 L612 203.3 L613 203.1 L614 202.9 L615 202.8 L616 202.5 L617 202.4 L618 202.6 L619 202.3 L620 202.3 L621 201.9 L622 202.0 L623 201.8 L624 201.8 L625 201.5 L626 201.3 L627 201.3 L628 201.2 L629 201.0 L630 201.2 L631 200.8 L632 200.8 L633 200.9 L634 200.7 L635 200.7 L636 200.5 L637 200.0 L638 200.0 L639 199.8 L640 200.0 L641 199.8 L642 199.6 L643 199.5 L644 199.5 L645 199.4 L646 199.0 L647 199.2 L648 198.9 L649 198.9 L650 198.5 L651 198.4 L652 198.7 L653 198.5 L654 198.3 L655 197.9 L656 197.8 L657 197.7 L658 197.6 L659 197.6 L660 197.5 L661 197.2 L662 197.2 L663 197.3 L664 196.9 L665 197.1 L666 196.9 L667 196.8 L668 196.5 L669 196.5 L670 196.5 L671 196.2 L672 195.9 L673 196.2 L674 196.1 L675 195.7 L676 195.5 L677 195.8 L678 195.5 L679 195.1 L680 195.1 L681 194.9 L682 195.2 L683 194.8 L684 195.0 L685 194.8 L686 194.3 L687 194.5 L688 194.3 L689 194.3 L690 194.3 L691 193.9 L692 193.7 L693 194.0 L694 193.6 L695 193.7 L696 193.5 L697 193.4 L698 193.4 L699 193.1 L700 192.9 L701 192.9 L702 192.7 L703 192.4 L704 192.1 L705 192.9 L706 192.2 L707 192.6 L708 191.8 L709 191.6 L710 191.4 L711 191.2 L712 191.9 L713 191.1 L714 191.3 L715 191.3 L716 191.5 L717 191.0 L718 191.2 L719 191.2 L720 190.8 L721 190.6 L722 191.0 L723 189.9 L724 189.9 L725 189.7 L726 190.1 L727 189.5 L728 189.7 L729 189.3 L730 188.8 L731 190.0 L732 189.4 L733 189.6 L734 189.0 L735 188.7 L736 188.4 L737 189.2 L738 189.3 L739 188.4 L740 187.9 L741 188.5 L742 188.2 L743 188.2 L744 188.8 L745 188.1 L746 188.3 L747 187.3 L748 187.6 L749 187.5 L750 187.7 L751 186.6 L752 187.4 L753 187.5 L754.5 184.5 L755.5 192 L756.5 185 L757.5 191 L758.5 184.5 L759.5 189.8 L760.5 185.3 L761.5 188.8 L762.5 186 L764 187.6 L765.5 185 L767 187.2 L768.5 183.6 L770 186.6 L771.5 183 L773 187 L774.5 182.5 L775.5 188.5 L776.5 181 L777.5 180 L779 181 L779.6 229 L780.6 230 L780.8 300 L779.8 316 L781 330 L780.4 376" fill="none" stroke="#12d412" stroke-width="1.1" shape-rendering="crispEdges"/><path d="M782.6 250 L782.6 376" fill="none" stroke="#1fd01f" stroke-width="1.2"/><path d="M786 309 L788 313" fill="none" stroke="#1fd01f" stroke-width="1.5"/><rect x="825" y="137" width="1.35" height="240" fill="#e0e0e0"/></svg>
<svg class="a" style="left:40px;top:402px" width="822" height="250" viewBox="40 402 822 250"><defs><linearGradient id="g404" x1="0" y1="0" x2="0" y2="1"><stop offset="0" stop-color="#242424"/><stop offset="1" stop-color="#000"/></linearGradient></defs><rect x="42" y="404" width="813" height="244" fill="#000"/><rect x="43" y="406" width="810" height="241" fill="url(#g404)"/><g shape-rendering="crispEdges"><rect x="61" y="406" width="1" height="241" fill="#00009e"/><rect x="79" y="406" width="1" height="241" fill="#00009e"/><rect x="97" y="406" width="1" height="241" fill="#00009e"/><rect x="115" y="406" width="1" height="241" fill="#00009e"/><rect x="133" y="406" width="1" height="241" fill="#0000ff"/><rect x="134" y="406" width="1" height="241" fill="#0000ff" opacity="0.25"/><rect x="151" y="406" width="1" height="241" fill="#00009e"/><rect x="169" y="406" width="1" height="241" fill="#00009e"/><rect x="187" y="406" width="1" height="241" fill="#00009e"/><rect x="205" y="406" width="1" height="241" fill="#00009e"/><rect x="223" y="406" width="1" height="241" fill="#0000ff"/><rect x="224" y="406" width="1" height="241" fill="#0000ff" opacity="0.25"/><rect x="241" y="406" width="1" height="241" fill="#00009e"/><rect x="259" y="406" width="1" height="241" fill="#00009e"/><rect x="277" y="406" width="1" height="241" fill="#00009e"/><rect x="295" y="406" width="1" height="241" fill="#00009e"/><rect x="313" y="406" width="1" height="241" fill="#0000ff"/><rect x="314" y="406" width="1" height="241" fill="#0000ff" opacity="0.25"/><rect x="331" y="406" width="1" height="241" fill="#00009e"/><rect x="349" y="406" width="1" height="241" fill="#00009e"/><rect x="367" y="406" width="1" height="241" fill="#00009e"/><rect x="385" y="406" width="1" height="241" fill="#00009e"/><rect x="403" y="406" width="1" height="241" fill="#0000ff"/><rect x="404" y="406" width="1" height="241" fill="#0000ff" opacity="0.25"/><rect x="421" y="406" width="1" height="241" fill="#00009e"/><rect x="439" y="406" width="1" height="241" fill="#00009e"/><rect x="457" y="406" width="1" height="241" fill="#00009e"/><rect x="475" y="406" width="1" height="241" fill="#00009e"/><rect x="493" y="406" width="1" height="241" fill="#0000ff"/><rect x="494" y="406" width="1" height="241" fill="#0000ff" opacity="0.25"/><rect x="511" y="406" width="1" height="241" fill="#00009e"/><rect x="529" y="406" width="1" height="241" fill="#00009e"/><rect x="547" y="406" width="1" height="241" fill="#00009e"/><rect x="565" y="406" width="1" height="241" fill="#00009e"/><rect x="583" y="406" width="1" height="241" fill="#0000ff"/><rect x="584" y="406" width="1" height="241" fill="#0000ff" opacity="0.25"/><rect x="601" y="406" width="1" height="241" fill="#00009e"/><rect x="619" y="406" width="1" height="241" fill="#00009e"/><rect x="637" y="406" width="1" height="241" fill="#00009e"/><rect x="655" y="406" width="1" height="241" fill="#00009e"/><rect x="673" y="406" width="1" height="241" fill="#0000ff"/><rect x="674" y="406" width="1" height="241" fill="#0000ff" opacity="0.25"/><rect x="691" y="406" width="1" height="241" fill="#00009e"/><rect x="709" y="406" width="1" height="241" fill="#00009e"/><rect x="727" y="406" width="1" height="241" fill="#00009e"/><rect x="745" y="406" width="1" height="241" fill="#00009e"/><rect x="763" y="406" width="1" height="241" fill="#0000ff"/><rect x="764" y="406" width="1" height="241" fill="#0000ff" opacity="0.25"/><rect x="781" y="406" width="1" height="241" fill="#00009e"/><rect x="799" y="406" width="1" height="241" fill="#00009e"/><rect x="817" y="406" width="1" height="241" fill="#00009e"/><rect x="835" y="406" width="1" height="241" fill="#00009e"/><rect x="43" y="406" width="810" height="1" fill="#0000ff"/><rect x="43" y="407" width="810" height="1" fill="#0000ff" opacity="0.25"/><rect x="41" y="406" width="2" height="1" fill="#0000ff"/><rect x="43" y="430" width="810" height="1" fill="#00009e"/><rect x="43" y="454" width="810" height="1" fill="#0000ff"/><rect x="43" y="455" width="810" height="1" fill="#0000ff" opacity="0.25"/><rect x="41" y="454" width="2" height="1" fill="#0000ff"/><rect x="43" y="478" width="810" height="1" fill="#00009e"/><rect x="43" y="502" width="810" height="1" fill="#0000ff"/><rect x="43" y="503" width="810" height="1" fill="#0000ff" opacity="0.25"/><rect x="41" y="502" width="2" height="1" fill="#0000ff"/><rect x="43" y="526" width="810" height="1" fill="#00009e"/><rect x="43" y="550" width="810" height="1" fill="#0000ff"/><rect x="43" y="551" width="810" height="1" fill="#0000ff" opacity="0.25"/><rect x="41" y="550" width="2" height="1" fill="#0000ff"/><rect x="43" y="574" width="810" height="1" fill="#00009e"/><rect x="43" y="598" width="810" height="1" fill="#0000ff"/><rect x="43" y="599" width="810" height="1" fill="#0000ff" opacity="0.25"/><rect x="41" y="598" width="2" height="1" fill="#0000ff"/><rect x="43" y="622" width="810" height="1" fill="#00009e"/><rect x="43" y="646" width="810" height="1" fill="#0000ff"/><rect x="43" y="647" width="810" height="1" fill="#0000ff" opacity="0.25"/><rect x="41" y="646" width="2" height="1" fill="#0000ff"/></g><g shape-rendering="crispEdges"><rect x="47" y="645.8" width="1" height="1.2" fill="#3cf01c"/><rect x="52" y="645.8" width="1" height="1.2" fill="#3cf01c"/><rect x="60" y="645.8" width="1" height="1.2" fill="#3cf01c"/><rect x="66" y="645.8" width="1" height="1.2" fill="#3cf01c"/><rect x="70" y="645.8" width="1" height="1.2" fill="#3cf01c"/><rect x="72" y="645.8" width="1" height="1.2" fill="#3cf01c"/><rect x="73" y="645.8" width="1" height="1.2" fill="#3cf01c"/><rect x="123" y="645.8" width="1" height="1.2" fill="#3cf01c"/><rect x="142" y="645.8" width="1" height="1.2" fill="#3cf01c"/><rect x="193" y="645.8" width="1" height="1.2" fill="#3cf01c"/><rect x="223" y="645.8" width="1" height="1.2" fill="#3cf01c"/><rect x="309" y="645.8" width="1" height="1.2" fill="#3cf01c"/><rect x="71" y="645.0" width="1" height="2.0" fill="#3cf01c"/><rect x="72" y="644.6" width="1" height="2.4" fill="#3cf01c"/><rect x="365" y="645.0" width="1" height="2.0" fill="#3cf01c"/><rect x="366" y="645.0" width="1" height="2.0" fill="#3cf01c"/><rect x="367" y="644.5" width="1" height="2.5" fill="#3cf01c"/><rect x="368" y="644.5" width="1" height="2.5" fill="#3cf01c"/><rect x="369" y="644.5" width="1" height="2.5" fill="#3cf01c"/><rect x="370" y="644.0" width="1" height="3.0" fill="#3cf01c"/><rect x="371" y="645.0" width="1" height="2.0" fill="#3cf01c"/><rect x="372" y="646.0" width="1" height="1.0" fill="#3cf01c"/><rect x="373" y="646.0" width="1" height="1.0" fill="#3cf01c"/><rect x="374" y="646.0" width="1" height="1.0" fill="#3cf01c"/><rect x="375" y="646.0" width="1" height="1.0" fill="#3cf01c"/><rect x="383" y="644.0" width="1" height="3.0" fill="#3cf01c"/><rect x="384" y="645.5" width="1" height="1.5" fill="#3cf01c"/><rect x="385" y="645.0" width="1" height="2.0" fill="#3cf01c"/><rect x="386" y="645.0" width="1" height="2.0" fill="#3cf01c"/><rect x="387" y="645.0" width="1" height="2.0" fill="#3cf01c"/><rect x="388" y="645.0" width="1" height="2.0" fill="#3cf01c"/><rect x="389" y="644.0" width="1" height="3.0" fill="#3cf01c"/><rect x="390" y="644.0" width="1" height="3.0" fill="#3cf01c"/><rect x="391" y="645.5" width="1" height="1.5" fill="#3cf01c"/><rect x="392" y="645.5" width="1" height="1.5" fill="#3cf01c"/><rect x="393" y="644.0" width="1" height="3.0" fill="#3cf01c"/><rect x="394" y="644.0" width="1" height="3.0" fill="#3cf01c"/><rect x="395" y="645.0" width="1" height="2.0" fill="#3cf01c"/><rect x="396" y="645.0" width="1" height="2.0" fill="#3cf01c"/><rect x="397" y="644.0" width="1" height="3.0" fill="#3cf01c"/><rect x="398" y="645.5" width="1" height="1.5" fill="#3cf01c"/><rect x="399" y="645.5" width="1" height="1.5" fill="#3cf01c"/><rect x="400" y="644.0" width="1" height="3.0" fill="#3cf01c"/><rect x="401" y="645.0" width="1" height="2.0" fill="#3cf01c"/><rect x="402" y="646.0" width="1" height="1.0" fill="#3cf01c"/><rect x="403" y="646.0" width="1" height="1.0" fill="#3cf01c"/><rect x="404" y="646.0" width="1" height="1.0" fill="#3cf01c"/><rect x="405" y="646.0" width="1" height="1.0" fill="#3cf01c"/><rect x="406" y="646.0" width="1" height="1.0" fill="#3cf01c"/><rect x="407" y="646.0" width="1" height="1.0" fill="#3cf01c"/><rect x="408" y="646.0" width="1" height="1.0" fill="#3cf01c"/><rect x="409" y="645.5" width="1" height="1.5" fill="#3cf01c"/><rect x="522" y="644.0" width="1" height="3.0" fill="#3cf01c"/><rect x="523" y="645.5" width="1" height="1.5" fill="#3cf01c"/><rect x="524" y="645.5" width="1" height="1.5" fill="#3cf01c"/><rect x="525" y="644.0" width="1" height="3.0" fill="#3cf01c"/><rect x="526" y="644.0" width="1" height="3.0" fill="#3cf01c"/><rect x="527" y="645.5" width="1" height="1.5" fill="#3cf01c"/><rect x="528" y="644.0" width="1" height="3.0" fill="#3cf01c"/><rect x="529" y="645.5" width="1" height="1.5" fill="#3cf01c"/><rect x="530" y="645.0" width="1" height="2.0" fill="#3cf01c"/><rect x="531" y="645.0" width="1" height="2.0" fill="#3cf01c"/><rect x="532" y="644.0" width="1" height="3.0" fill="#3cf01c"/><rect x="598" y="645.5" width="1" height="1.5" fill="#3cf01c"/><rect x="736" y="645.8" width="1" height="1.2" fill="#3cf01c"/><rect x="737" y="645.2" width="1" height="1.8" fill="#3cf01c"/><rect x="738" y="644.7" width="1" height="2.3" fill="#3cf01c"/><rect x="739" y="644.5" width="1" height="2.5" fill="#3cf01c"/><rect x="740" y="644.2" width="1" height="2.8" fill="#3cf01c"/><rect x="741" y="643.8" width="1" height="3.2" fill="#3cf01c"/><rect x="742" y="643.2" width="1" height="3.8" fill="#3cf01c"/><rect x="743" y="642.7" width="1" height="4.3" fill="#3cf01c"/><rect x="744" y="641.9" width="1" height="5.1" fill="#8cf01c"/><rect x="745" y="641.5" width="1" height="5.5" fill="#8cf01c"/><rect x="746" y="641.1" width="1" height="5.9" fill="#8cf01c"/><rect x="747" y="640.6" width="1" height="6.4" fill="#8cf01c"/><rect x="748" y="640.2" width="1" height="6.8" fill="#8cf01c"/><rect x="749" y="640.0" width="1" height="7.0" fill="#8cf01c"/><rect x="750" y="639.0" width="1" height="8.0" fill="#d8f010"/><rect x="751" y="637.0" width="1" height="10.0" fill="#ffe000"/><rect x="752" y="635.0" width="1" height="12.0" fill="#ffb000"/><rect x="753" y="636.0" width="1" height="11.0" fill="#ffd800"/><rect x="753" y="610.0" width="1" height="37.0" fill="#ff1493"/><rect x="754" y="618.0" width="1" height="29.0" fill="#ff1493"/><rect x="755" y="619.0" width="1" height="28.0" fill="#ff1493"/><rect x="756" y="616.0" width="1" height="31.0" fill="#ff10b8"/><rect x="757" y="605.0" width="1" height="42.0" fill="#ff10b8"/><rect x="758" y="611.0" width="1" height="36.0" fill="#ff1493"/><rect x="759" y="598.0" width="1" height="49.0" fill="#ff0a3c"/><rect x="760" y="597.0" width="1" height="50.0" fill="#ff0a3c"/><rect x="761" y="591.0" width="1" height="56.0" fill="#ff0a3c"/><rect x="762" y="597.0" width="1" height="50.0" fill="#ff0a3c"/><rect x="763" y="604.0" width="1" height="43.0" fill="#ff10b8"/><rect x="764" y="603.0" width="1" height="44.0" fill="#ff1493"/><rect x="765" y="598.0" width="1" height="49.0" fill="#ff0a3c"/><rect x="766" y="595.0" width="1" height="52.0" fill="#ff0a3c"/><rect x="767" y="599.0" width="1" height="48.0" fill="#ff1493"/><rect x="768" y="586.0" width="1" height="61.0" fill="#ff1493"/><rect x="769" y="598.0" width="1" height="49.0" fill="#ff0a3c"/><rect x="770" y="599.0" width="1" height="48.0" fill="#ff0a3c"/><rect x="771" y="597.0" width="1" height="50.0" fill="#ff0a3c"/><rect x="772" y="604.0" width="1" height="43.0" fill="#ff1493"/><rect x="773" y="605.0" width="1" height="42.0" fill="#ff10b8"/><rect x="774" y="607.0" width="1" height="40.0" fill="#ff1493"/><rect x="775" y="611.0" width="1" height="36.0" fill="#ff1493"/><rect x="776" y="598.0" width="1" height="49.0" fill="#ff0a3c"/><rect x="777" y="613.0" width="1" height="34.0" fill="#ff1493"/><rect x="778" y="614.0" width="1" height="33.0" fill="#ff1493"/></g><rect x="779.9" y="598" width="1.3" height="49" fill="#ff1050"/><rect x="782.0" y="479" width="1.3" height="168" fill="#ff1060"/><rect x="784.9" y="612" width="1.3" height="35" fill="#ff30a0"/><rect x="787.0" y="546" width="1.3" height="101" fill="#ff20c0"/><rect x="789.0" y="571" width="1.3" height="76" fill="#ff1040"/><rect x="792.0" y="609" width="1.3" height="38" fill="#ff30c0"/><rect x="825" y="406" width="1.35" height="240" fill="#e0e0e0"/></svg>
<svg class="a" style="left:853px;top:130px" width="8" height="252" viewBox="853 130 8 252" shape-rendering="crispEdges"><rect x="855" y="137" width="3" height="1" fill="#0000ff"/><rect x="854" y="152" width="2" height="1" fill="#0000d0"/><rect x="855" y="167" width="3" height="1" fill="#0000ff"/><rect x="854" y="182" width="2" height="1" fill="#0000d0"/><rect x="855" y="197" width="3" height="1" fill="#0000ff"/><rect x="854" y="212" width="2" height="1" fill="#0000d0"/><rect x="855" y="227" width="3" height="1" fill="#0000ff"/><rect x="854" y="242" width="2" height="1" fill="#0000d0"/><rect x="855" y="257" width="3" height="1" fill="#0000ff"/><rect x="854" y="272" width="2" height="1" fill="#0000d0"/><rect x="855" y="287" width="3" height="1" fill="#0000ff"/><rect x="854" y="302" width="2" height="1" fill="#0000d0"/><rect x="855" y="317" width="3" height="1" fill="#0000ff"/><rect x="854" y="332" width="2" height="1" fill="#0000d0"/><rect x="855" y="347" width="3" height="1" fill="#0000ff"/><rect x="854" y="362" width="2" height="1" fill="#0000d0"/><rect x="855" y="377" width="3" height="1" fill="#0000ff"/></svg>
<div class="t" style="right:986.50px;top:129.02px;color:#000;font-size:11.5px;letter-spacing:-0.2px;font-weight:normal;">200</div>
<div class="t" style="right:986.50px;top:177.02px;color:#000;font-size:11.5px;letter-spacing:-0.2px;font-weight:normal;">160</div>
<div class="t" style="right:986.50px;top:225.02px;color:#000;font-size:11.5px;letter-spacing:-0.2px;font-weight:normal;">120</div>
<div class="t" style="right:986.50px;top:273.02px;color:#000;font-size:11.5px;letter-spacing:-0.2px;font-weight:normal;">80</div>
<div class="t" style="right:986.50px;top:321.02px;color:#000;font-size:11.5px;letter-spacing:-0.2px;font-weight:normal;">40</div>
<div class="t" style="right:986.50px;top:398.02px;color:#000;font-size:11.5px;letter-spacing:-0.2px;font-weight:normal;">500</div>
<div class="t" style="right:986.50px;top:446.02px;color:#000;font-size:11.5px;letter-spacing:-0.2px;font-weight:normal;">400</div>
<div class="t" style="right:986.50px;top:494.02px;color:#000;font-size:11.5px;letter-spacing:-0.2px;font-weight:normal;">300</div>
<div class="t" style="right:986.50px;top:542.02px;color:#000;font-size:11.5px;letter-spacing:-0.2px;font-weight:normal;">200</div>
<div class="t" style="right:986.50px;top:590.02px;color:#000;font-size:11.5px;letter-spacing:-0.2px;font-weight:normal;">100</div>
<div class="t" style="left:858.30px;top:129.02px;color:#000;font-size:11.5px;letter-spacing:-0.2px;font-weight:normal;">16</div>
<div class="t" style="left:858.30px;top:159.02px;color:#000;font-size:11.5px;letter-spacing:-0.2px;font-weight:normal;">14</div>
<div class="t" style="left:858.30px;top:189.02px;color:#000;font-size:11.5px;letter-spacing:-0.2px;font-weight:normal;">12</div>
<div class="t" style="left:858.30px;top:219.02px;color:#000;font-size:11.5px;letter-spacing:-0.2px;font-weight:normal;">10</div>
<div class="t" style="left:858.30px;top:249.02px;color:#000;font-size:11.5px;letter-spacing:-0.2px;font-weight:normal;">8</div>
<div class="t" style="left:858.30px;top:279.02px;color:#000;font-size:11.5px;letter-spacing:-0.2px;font-weight:normal;">6</div>
<div class="t" style="left:858.30px;top:309.02px;color:#000;font-size:11.5px;letter-spacing:-0.2px;font-weight:normal;">4</div>
<div class="t" style="left:858.30px;top:339.02px;color:#000;font-size:11.5px;letter-spacing:-0.2px;font-weight:normal;">2</div>
<div class="t" style="left:26px;width:40px;text-align:center;top:379.32px;font-size:11.5px;letter-spacing:-0.2px">0.0</div>
<div class="t" style="left:115px;width:40px;text-align:center;top:379.32px;font-size:11.5px;letter-spacing:-0.2px">0.5</div>
<div class="t" style="left:205px;width:40px;text-align:center;top:379.32px;font-size:11.5px;letter-spacing:-0.2px">1.0</div>
<div class="t" style="left:295px;width:40px;text-align:center;top:379.32px;font-size:11.5px;letter-spacing:-0.2px">1.5</div>
<div class="t" style="left:385px;width:40px;text-align:center;top:379.32px;font-size:11.5px;letter-spacing:-0.2px">2.0</div>
<div class="t" style="left:475px;width:40px;text-align:center;top:379.32px;font-size:11.5px;letter-spacing:-0.2px">2.5</div>
<div class="t" style="left:565px;width:40px;text-align:center;top:379.32px;font-size:11.5px;letter-spacing:-0.2px">3.0</div>
<div class="t" style="left:655px;width:40px;text-align:center;top:379.32px;font-size:11.5px;letter-spacing:-0.2px">3.5</div>
<div class="t" style="left:745px;width:40px;text-align:center;top:379.32px;font-size:11.5px;letter-spacing:-0.2px">4.0</div>
<div class="t" style="left:835px;width:40px;text-align:center;top:379.32px;font-size:11.5px;letter-spacing:-0.2px">4.5</div>
<div class="t" style="left:26px;width:40px;text-align:center;top:648.52px;font-size:11.5px;letter-spacing:-0.2px">0.0</div>
<div class="t" style="left:115px;width:40px;text-align:center;top:648.52px;font-size:11.5px;letter-spacing:-0.2px">0.5</div>
<div class="t" style="left:205px;width:40px;text-align:center;top:648.52px;font-size:11.5px;letter-spacing:-0.2px">1.0</div>
<div class="t" style="left:295px;width:40px;text-align:center;top:648.52px;font-size:11.5px;letter-spacing:-0.2px">1.5</div>
<div class="t" style="left:385px;width:40px;text-align:center;top:648.52px;font-size:11.5px;letter-spacing:-0.2px">2.0</div>
<div class="t" style="left:475px;width:40px;text-align:center;top:648.52px;font-size:11.5px;letter-spacing:-0.2px">2.5</div>
<div class="t" style="left:565px;width:40px;text-align:center;top:648.52px;font-size:11.5px;letter-spacing:-0.2px">3.0</div>
<div class="t" style="left:655px;width:40px;text-align:center;top:648.52px;font-size:11.5px;letter-spacing:-0.2px">3.5</div>
<div class="t" style="left:745px;width:40px;text-align:center;top:648.52px;font-size:11.5px;letter-spacing:-0.2px">4.0</div>
<div class="t" style="left:835px;width:40px;text-align:center;top:648.52px;font-size:11.5px;letter-spacing:-0.2px">4.5</div>
<div class="gb" style="left:878px;top:130px;width:140px;height:84px"></div>
<div class="t" style="left:884.5px;top:123.60px;padding:0 2px 0 3px;background:#fcfcfe;color:#0046d5;letter-spacing:-0.1px">Инф. о диске</div>
<div class="t" style="left:889.80px;top:138.79px;color:#000;font-size:11px;letter-spacing:-0.15px;font-weight:normal;">Тип:</div>
<div class="t" style="left:929.30px;top:138.79px;color:#000080;font-size:11px;letter-spacing:-0.2px;font-weight:normal;">DVD+R</div>
<div class="t" style="left:889.80px;top:156.49px;color:#000;font-size:11px;letter-spacing:-0.15px;font-weight:normal;">ID:</div>
<div class="t" style="left:929.30px;top:156.49px;color:#000080;font-size:11px;letter-spacing:-0.2px;font-weight:normal;">YUDEN000 T01</div>
<div class="t" style="left:889.80px;top:174.19px;color:#000;font-size:11px;letter-spacing:-0.15px;font-weight:normal;">Дата:</div>
<div class="t" style="left:929.30px;top:174.19px;color:#000080;font-size:11px;letter-spacing:-0.2px;font-weight:normal;">28 August 2005</div>
<div class="t" style="left:889.80px;top:191.89px;color:#000;font-size:11px;letter-spacing:-0.15px;font-weight:normal;">Label:</div>
<div class="t" style="left:929.30px;top:191.89px;color:#000080;font-size:11px;letter-spacing:-0.2px;font-weight:normal;">Clips001</div>
<div class="gb" style="left:878px;top:221px;width:140px;height:205px"></div>
<div class="t" style="left:884.5px;top:214.40px;padding:0 2px 0 3px;background:#fafafb;color:#0046d5;letter-spacing:-0.1px">Settings</div>
<div class="t" style="left:889.40px;top:231.19px;color:#000;font-size:11px;letter-spacing:-0.2px;font-weight:normal;">Скорость</div>
<div class="a" style="left:941px;top:228px;width:71px;height:21px;box-sizing:border-box;border:1px solid #c9c7ba;background:#fbfbf8"></div>
<div class="a" style="left:944px;top:231px;width:49px;height:15px;background:#ebe9da"></div>
<div class="a" style="left:995px;top:230px;width:15px;height:17px;border-radius:2px;background:linear-gradient(135deg,#f4f3ee,#e4e2d6);box-shadow:inset 0 0 0 1px #e8e6da"></div>
<svg class="a" style="left:998px;top:235px" width="10" height="8" viewBox="0 0 10 8">
<path d="M1 1.5 L5 5.5 L9 1.5" fill="none" stroke="#c2c0b2" stroke-width="2"/></svg>
<div class="t" style="left:945.70px;top:231.17px;color:#aca899;font-size:12.5px;letter-spacing:-0.9px;font-weight:normal;">12 X</div>
<div class="t" style="left:889.40px;top:263.59px;color:#000;font-size:11px;letter-spacing:-0.15px;font-weight:normal;">Пуск</div>
<div class="t" style="left:944.70px;top:261.69px;color:#aca899;font-size:11px;letter-spacing:-0.2px;font-weight:normal;">0000 MB</div>
<div class="t" style="left:889.40px;top:287.79px;color:#000;font-size:11px;letter-spacing:-0.15px;font-weight:normal;">Конец</div>
<div class="t" style="left:944.70px;top:285.59px;color:#aca899;font-size:11px;letter-spacing:-0.2px;font-weight:normal;">4453 MB</div>
<div class="cb" style="left:889px;top:313px"></div>
<div class="t" style="left:905.70px;top:312.39px;color:#000;font-size:11px;letter-spacing:-0.15px;font-weight:normal;">Quick Scan</div>
<div class="cb" style="left:889px;top:341px"><svg width="11" height="11" viewBox="0 0 11 11" style="display:block"><path d="M2 4.6 L4.4 7.2 L9 2" fill="none" stroke="#21a121" stroke-width="2.3"/></svg></div>
<div class="t" style="left:905.70px;top:340.59px;color:#000;font-size:11px;letter-spacing:-0.15px;font-weight:normal;">Show C1/PIE</div>
<div class="cb" style="left:889px;top:357px"><svg width="11" height="11" viewBox="0 0 11 11" style="display:block"><path d="M2 4.6 L4.4 7.2 L9 2" fill="none" stroke="#21a121" stroke-width="2.3"/></svg></div>
<div class="t" style="left:905.70px;top:356.59px;color:#000;font-size:11px;letter-spacing:-0.15px;font-weight:normal;">Show C2/PIF</div>
<div class="cb d" style="left:889px;top:374px"><svg width="11" height="11" viewBox="0 0 11 11" style="display:block"><path d="M2 4.6 L4.4 7.2 L9 2" fill="none" stroke="#c2c0b2" stroke-width="2.3"/></svg></div>
<div class="t" style="left:905.70px;top:373.39px;color:#aca899;font-size:11px;letter-spacing:-0.15px;font-weight:normal;">Show Jitter</div>
<div class="cb" style="left:889px;top:390px"><svg width="11" height="11" viewBox="0 0 11 11" style="display:block"><path d="M2 4.6 L4.4 7.2 L9 2" fill="none" stroke="#21a121" stroke-width="2.3"/></svg></div>
<div class="t" style="left:905.70px;top:389.79px;color:#000;font-size:11px;letter-spacing:-0.15px;font-weight:normal;">Show Read Speed</div>
<div class="cb d" style="left:889px;top:406px"><svg width="11" height="11" viewBox="0 0 11 11" style="display:block"><path d="M2 4.6 L4.4 7.2 L9 2" fill="none" stroke="#c2c0b2" stroke-width="2.3"/></svg></div>
<div class="t" style="left:905.70px;top:405.79px;color:#aca899;font-size:11px;letter-spacing:-0.15px;font-weight:normal;">Show Write Speed</div>
<div class="gb" style="left:878px;top:431px;width:140px;height:27px"></div>
<div class="t" style="left:889.60px;top:437.59px;color:#000;font-size:11px;letter-spacing:-0.15px;font-weight:normal;">Индекс</div>
<div class="t" style="right:16.40px;top:437.59px;color:#000080;font-size:11px;letter-spacing:-0.15px;font-weight:normal;">0</div>
<div class="gb" style="left:878px;top:463px;width:140px;height:57px"></div>
<div class="t" style="left:889.60px;top:471.39px;color:#000;font-size:11px;letter-spacing:-0.15px;font-weight:normal;">Выполнено:</div>
<div class="t" style="right:16.00px;top:471.39px;color:#000080;font-size:11px;letter-spacing:-0.15px;font-weight:normal;">95 %</div>
<div class="t" style="left:889.60px;top:487.39px;color:#000;font-size:11px;letter-spacing:-0.15px;font-weight:normal;">Позиция:</div>
<div class="t" style="right:16.40px;top:487.39px;color:#000080;font-size:11px;letter-spacing:-0.3px;font-weight:normal;">4264 MB</div>
<div class="t" style="left:889.60px;top:502.79px;color:#000;font-size:11px;letter-spacing:-0.15px;font-weight:normal;">Скорость:</div>
<div class="t" style="right:16.60px;top:502.79px;color:#000080;font-size:11px;letter-spacing:-0.15px;font-weight:normal;">39.61</div>
<div class="cg" style="left:10px;top:677px;width:146px;height:57px"></div>
<div class="a" style="left:17px;top:672px;width:55px;height:12px;background:#f4f3ee"></div>
<div class="a" style="left:20px;top:674px;width:8px;height:8px;box-sizing:border-box;border:1px solid #000;background:#00ffff"></div>
<div class="t" style="left:31.60px;top:670.79px;color:#000;font-size:11px;letter-spacing:-0.2px;font-weight:normal;">PI Errors</div>
<div class="t" style="left:18.60px;top:687.09px;color:#000;font-size:11px;letter-spacing:-0.2px;font-weight:normal;">Среднее:</div>
<div class="t" style="right:877.50px;top:687.09px;color:#000080;font-size:11px;letter-spacing:-0.1px;font-weight:normal;">16.73</div>
<div class="t" style="left:18.60px;top:701.99px;color:#000;font-size:11px;letter-spacing:-0.2px;font-weight:normal;">Максим.:</div>
<div class="t" style="right:877.50px;top:701.99px;color:#000080;font-size:11px;letter-spacing:-0.1px;font-weight:normal;">171</div>
<div class="t" style="left:18.60px;top:716.79px;color:#000;font-size:11px;letter-spacing:-0.2px;font-weight:normal;">Всего:</div>
<div class="t" style="right:877.50px;top:716.79px;color:#000080;font-size:11px;letter-spacing:-0.1px;font-weight:normal;">205412</div>
<div class="cg" style="left:168px;top:677px;width:146px;height:57px"></div>
<div class="a" style="left:175px;top:672px;width:64px;height:12px;background:#f4f3ee"></div>
<div class="a" style="left:178px;top:674px;width:8px;height:8px;box-sizing:border-box;border:1px solid #000;background:#ffff00"></div>
<div class="t" style="left:189.60px;top:670.79px;color:#000;font-size:11px;letter-spacing:-0.2px;font-weight:normal;">PI Failures</div>
<div class="t" style="left:177.40px;top:687.09px;color:#000;font-size:11px;letter-spacing:-0.2px;font-weight:normal;">Среднее:</div>
<div class="t" style="right:718.70px;top:687.09px;color:#000080;font-size:11px;letter-spacing:-0.1px;font-weight:normal;">2.94</div>
<div class="t" style="left:177.40px;top:701.99px;color:#000;font-size:11px;letter-spacing:-0.2px;font-weight:normal;">Максим.:</div>
<div class="t" style="right:718.70px;top:701.99px;color:#000080;font-size:11px;letter-spacing:-0.1px;font-weight:normal;">349</div>
<div class="t" style="left:177.40px;top:716.79px;color:#000;font-size:11px;letter-spacing:-0.2px;font-weight:normal;">Всего:</div>
<div class="t" style="right:718.70px;top:716.79px;color:#000080;font-size:11px;letter-spacing:-0.1px;font-weight:normal;">26081</div>
<div class="cg" style="left:327px;top:677px;width:147px;height:43px"></div>
<div class="a" style="left:334px;top:672px;width:36px;height:12px;background:#f4f3ee"></div>
<div class="a" style="left:337px;top:674px;width:8px;height:8px;box-sizing:border-box;border:1px solid #000;background:#ff00ff"></div>
<div class="t" style="left:348.60px;top:670.79px;color:#000;font-size:11px;letter-spacing:-0.2px;font-weight:normal;">Jitter</div>
<div class="t" style="left:336.60px;top:687.09px;color:#000;font-size:11px;letter-spacing:-0.2px;font-weight:normal;">Среднее:</div>
<div class="t" style="right:558.70px;top:687.09px;color:#000080;font-size:11px;letter-spacing:-0.1px;font-weight:normal;">-</div>
<div class="t" style="left:336.60px;top:701.99px;color:#000;font-size:11px;letter-spacing:-0.2px;font-weight:normal;">Максим.:</div>
<div class="t" style="right:558.70px;top:701.99px;color:#000080;font-size:11px;letter-spacing:-0.1px;font-weight:normal;">-</div>
<div class="t" style="left:336.60px;top:720.59px;color:#000;font-size:11px;letter-spacing:-0.4px;font-weight:normal;">PO Failures:</div>
<div class="t" style="right:558.70px;top:720.59px;color:#000080;font-size:11px;letter-spacing:-0.15px;font-weight:normal;">-</div>
<div class="a" style="left:7px;top:735px;width:1014px;height:1px;background:#cfcdc0"></div>
<div class="a" style="left:0;top:737px;width:1024px;height:5px;background:linear-gradient(#5e93ea 0,#3a7ae6 30%,#2968de 100%)"></div>
<div class="a" style="left:0;top:737px;width:93px;height:5px;background:linear-gradient(#7cbd7c,#409c41 45%,#38963a);border-radius:0 7px 0 0"></div>
<div class="a" style="left:913px;top:737px;width:111px;height:5px;background:linear-gradient(#3fb6f2,#18a4ec 40%);border-left:1px solid #0c4fa8"></div>
</body></html>
